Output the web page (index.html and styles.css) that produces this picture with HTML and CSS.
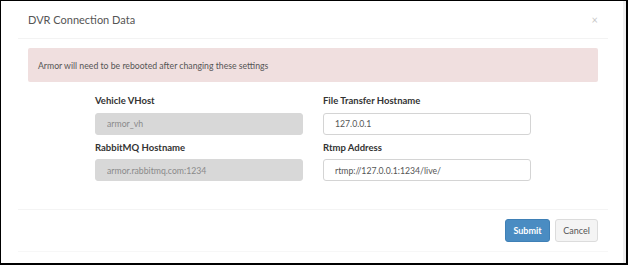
FILE: index.html
```html
<!DOCTYPE html>
<html lang="en">
<head>
  <meta charset="UTF-8">
  <title>DVR Connection Data</title>
  <link rel="stylesheet" href="styles.css">
</head>
<body>
  <div class="frame">
    <div class="modal">
      <div class="modal-header">
        <h4>DVR Connection Data</h4>
        <span class="close">&times;</span>
      </div>
      <div class="modal-body">
        <div class="alert">Armor will need to be rebooted after changing these settings</div>
        <div class="form-grid">
          <div class="field">
            <label>Vehicle VHost</label>
            <input type="text" value="armor_vh" disabled>
          </div>
          <div class="field">
            <label>File Transfer Hostname</label>
            <input type="text" value="127.0.0.1">
          </div>
          <div class="field">
            <label>RabbitMQ Hostname</label>
            <input type="text" value="armor.rabbitmq.com:1234" disabled>
          </div>
          <div class="field">
            <label>Rtmp Address</label>
            <input type="text" value="rtmp://127.0.0.1:1234/live/">
          </div>
        </div>
      </div>
      <div class="modal-footer">
        <button class="btn btn-primary">Submit</button>
        <button class="btn btn-default">Cancel</button>
      </div>
    </div>
    <div class="strip"></div>
  </div>
</body>
</html>
```

FILE: styles.css
```css
* {
  box-sizing: border-box;
}
body {
  margin: 0;
  font-family: Lato, "Liberation Sans", sans-serif;
  color: #333;
  background: #fff;
}
.frame {
  width: 628px;
  height: 265px;
  border-left: 1px solid #000;
  border-top: 1px solid #000;
  border-right: 2px solid #000;
  border-bottom: 2px solid #000;
  display: flex;
}
.strip {
  width: 3px;
  background: #efefef;
}
.modal {
  flex: 1;
  display: flex;
  flex-direction: column;
}
.modal-header {
  margin: 0 15px 0 17px;
  padding: 0 10px;
  height: 38px;
  border-bottom: 1px solid #f3f3f3;
  display: flex;
  align-items: center;
  justify-content: space-between;
}
.modal-header h4 {
  margin: 0;
  font-size: 11px;
  font-weight: normal;
  color: #555;
}
.modal-header .close {
  font-size: 11px;
  color: #c8c8c8;
}
.modal-body {
  margin: 0 15px 0 17px;
  padding: 9px 10px 0;
  height: 171px;
  border-bottom: 1px solid #f4f4f4;
}
.alert {
  background-color: #f0dfdf;
  border-radius: 2px;
  height: 34px;
  padding: 0 10px;
  display: flex;
  align-items: center;
  font-size: 8.7px;
  color: #555;
}
.form-grid {
  width: 436px;
  margin: 12px auto 0;
  display: grid;
  grid-template-columns: 208px 208px;
  column-gap: 20px;
  row-gap: 6px;
}
.field label {
  display: block;
  font-size: 9.5px;
  font-weight: bold;
  color: #333;
  height: 14px;
  line-height: 14px;
  margin-bottom: 3px;
}
.field input {
  width: 208px;
  height: 22px;
  padding: 0 11px;
  font-family: Lato, "Liberation Sans", sans-serif;
  font-size: 8.7px;
  color: #555;
  border: 1px solid #d4d4d4;
  border-radius: 3px;
  background: #fff;
  outline: none;
}
.field input:disabled {
  background: #d8d8d8;
  border-color: #d8d8d8;
  color: #8a8a8a;
}
.modal-footer {
  margin: 0 15px 0 17px;
  padding: 9px 10px 0;
  height: 42px;
  border-bottom: 1px solid #f7f7f7;
  display: flex;
  justify-content: flex-end;
  align-items: flex-start;
  gap: 5px;
}
.btn {
  font-family: Lato, "Liberation Sans", sans-serif;
  font-size: 9px;
  height: 23px;
  border-radius: 3px;
  cursor: pointer;
}
.btn-primary {
  width: 45px;
  background: #4a8cc2;
  border: 1px solid #3f80b6;
  color: #fff;
  font-weight: bold;
}
.btn-default {
  width: 43px;
  background: #f4f4f4;
  border: 1px solid #dcdcdc;
  color: #555;
}
```
